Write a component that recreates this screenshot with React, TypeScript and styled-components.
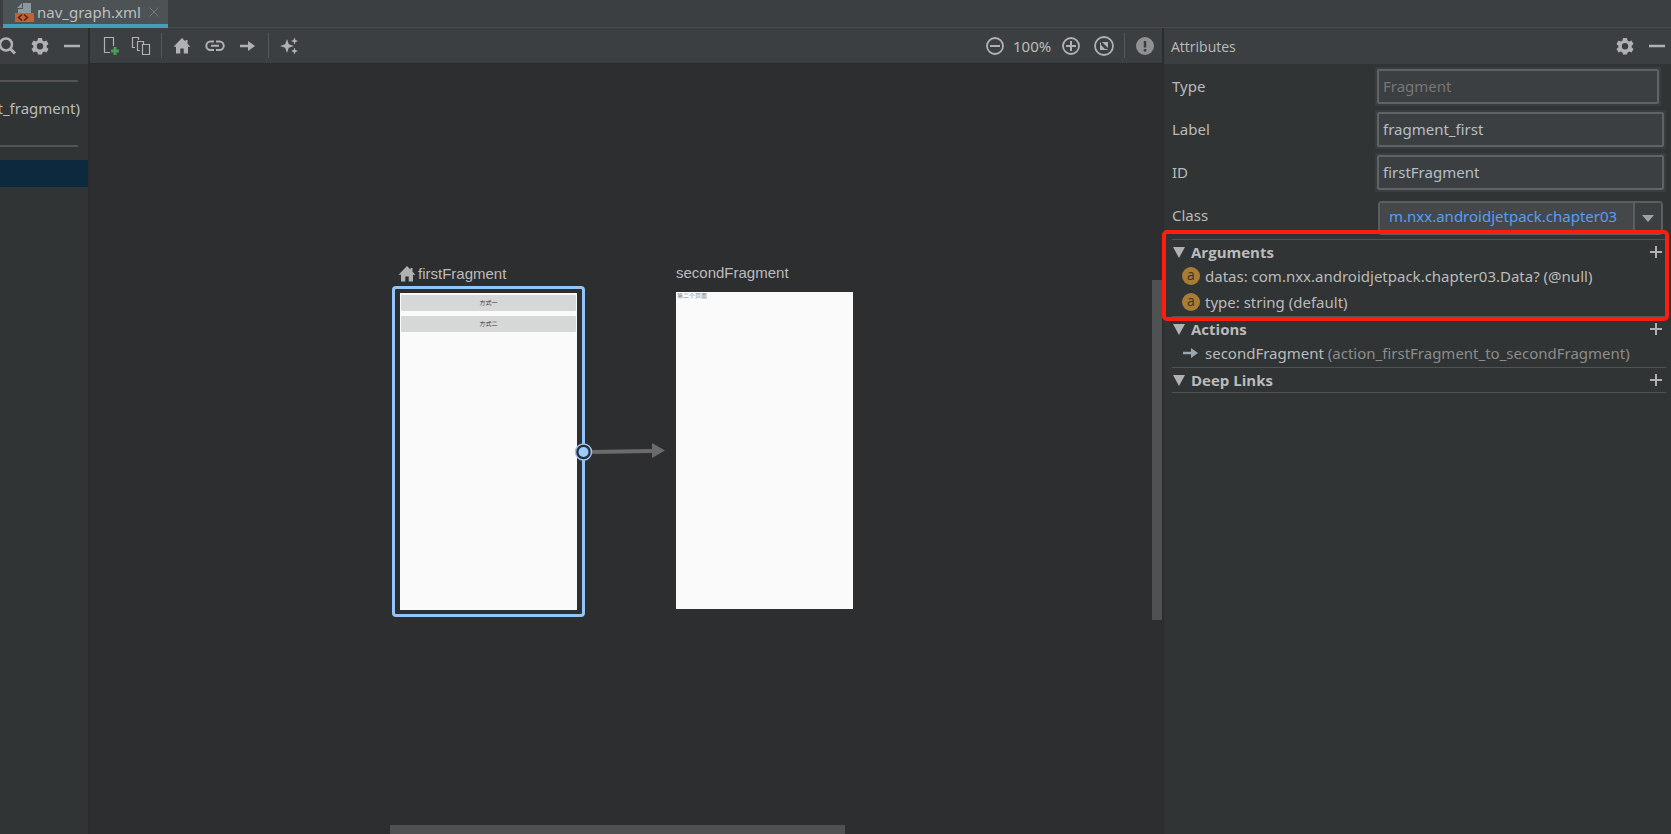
import React from "react";
import styled, { createGlobalStyle } from "styled-components";

const GlobalStyle = createGlobalStyle`
  * { box-sizing: border-box; }
  body {
    margin: 0;
    background: #303434;
    color: #bbbbbb;
    font: 15px/20px "Noto Sans", "Open Sans", sans-serif;
  }
  button, input, select { font: inherit; color: inherit; }
`;

const Window = styled.div`
  min-height: 100vh;
  display: flex;
  flex-direction: column;
  overflow: hidden;
`;

const TabBar = styled.nav`
  height: 28px;
  flex: none;
  display: flex;
  padding-left: 3px;
  background: #3c3f41;
  border-bottom: 1px solid #4b4b4c;
`;

const Tab = styled.div`
  height: 28px;
  display: flex;
  align-items: center;
  gap: 3px;
  padding: 0 4px 0 11px;
  background: #4d5254;
  border-bottom: 4px solid #459fba;
`;

const TabLink = styled.a`
  color: #bdbfc1;
  text-decoration: none;
`;

const IconButton = styled.button`
  width: 20px;
  height: 20px;
  flex: none;
  padding: 0;
  border: 0;
  background: none;
  color: #afb1b3;
  display: grid;
  place-items: center;
`;

const Body = styled.div`
  flex: 1;
  display: flex;
`;

const Sidebar = styled.aside`
  width: 90px;
  flex: none;
  display: flex;
  flex-direction: column;
  overflow: hidden;
  border-right: 2px solid #2c2d2e;
`;

const Header = styled.header`
  height: 36px;
  flex: none;
  display: flex;
  align-items: center;
  background: #3c3f41;
`;

const SidebarHeader = styled(Header)`
  justify-content: flex-end;
  gap: 12px;
  padding-right: 6px;
`;

const SidebarRule = styled.hr`
  width: 78px;
  height: 2px;
  margin: 0;
  border: 0;
  background: #555253;
`;

const TreeList = styled.div`
  display: flex;
  flex-direction: column;
  padding-top: 16px;
`;

const TreeItem = styled.div`
  height: 63px;
  display: flex;
  align-items: center;
  justify-content: flex-end;
  padding: 0 8px 12px 0;
  white-space: nowrap;
`;

const SelectedItem = styled.div`
  height: 27px;
  margin-top: 13px;
  background: #0d293e;
`;

const Workspace = styled.main`
  flex: 1;
  min-width: 0;
  display: flex;
  flex-direction: column;
`;

const Toolbar = styled(Header)`
  border-bottom: 1px solid #2a2b2c;
`;

const ToolGroup = styled.div<{ $gap: number }>`
  display: flex;
  align-items: center;
  gap: ${(p) => p.$gap}px;
  padding: 0 10px;
  &:last-child { padding-right: 7px; }
`;

const Divider = styled.span`
  width: 1px;
  height: 25px;
  background: #55585a;
`;

const Spacer = styled.span`
  flex: 1;
`;

const ZoomGroup = styled.div`
  display: flex;
  align-items: center;
  gap: 8px;
`;

const ZoomText = styled.span`
  width: 40px;
`;

const Canvas = styled.div`
  position: relative;
  flex: 1;
  min-height: 600px;
  overflow: hidden;
  background: #2d2e30;
`;

const Node = styled.section<{ $x: number; $y: number }>`
  position: absolute;
  left: ${(p) => p.$x}px;
  top: ${(p) => p.$y}px;
`;

const NodeTitle = styled.h2<{ $inset?: boolean }>`
  display: flex;
  align-items: center;
  gap: 1px;
  height: 20px;
  margin: 0;
  padding-left: ${(p) => (p.$inset ? 5 : 0)}px;
  font: 400 15px/20px "Liberation Sans", sans-serif;
  color: #bbbcbd;
`;

const Selection = styled.div`
  margin-top: 2px;
  padding: 4px 5px;
  border: 3px solid #94c5f8;
  border-radius: 4px;
`;

const Preview = styled.div<{ $gapAbove?: boolean }>`
  width: 177px;
  height: 317px;
  margin-top: ${(p) => (p.$gapAbove ? 9 : 0)}px;
  display: flex;
  flex-direction: column;
  gap: 5px;
  padding: ${(p) => (p.$gapAbove ? 0 : 2)}px 1px;
  background: #fafafa;
  color: #808080;
  font: 6px/8px "Noto Sans CJK SC", sans-serif;
  text-rendering: geometricPrecision;
`;

const PreviewButton = styled.button`
  height: 16px;
  padding: 0;
  border: 0;
  border-radius: 1px;
  background: #d6d7d7;
  color: #333333;
  text-rendering: inherit;
`;

const Connector = styled.svg`
  position: absolute;
  left: 484px;
  top: 373px;
`;

const ScrollThumb = styled.div<{ $vertical?: boolean }>`
  position: absolute;
  background: #505152;
  ${(p) =>
    p.$vertical
      ? "right: 0; top: 216px; width: 10px; height: 340px;"
      : "left: 300px; bottom: 0; width: 455px; height: 9px;"}
`;

const Attributes = styled.aside`
  width: 509px;
  flex: none;
  border-left: 2px solid #2c2d2e;
`;

const PanelHeader = styled(Header)`
  gap: 12px;
  padding: 0 4px 0 7px;
`;

const PanelTitle = styled.h1`
  flex: 1;
  margin: 0;
  padding-top: 2px;
  font: 400 14px/20px "Open Sans", sans-serif;
`;

const Form = styled.form`
  display: flex;
  flex-direction: column;
  gap: 4px;
  padding: 3px 5px 3px 8px;
`;

const FormRow = styled.div`
  height: 39px;
  display: flex;
  align-items: center;
`;

const FieldLabel = styled.label`
  width: 203px;
  flex: none;
  padding-bottom: 1px;
`;

const FieldFrame = styled.div<{ $short?: boolean }>`
  flex: 1;
  min-width: 0;
  padding: 2px;
  margin-right: ${(p) => (p.$short ? 5 : 0)}px;
  background: #3a3d3f;
`;

const TextField = styled.input`
  display: block;
  width: 100%;
  height: 35px;
  padding: 0 4px 1px;
  border: 2px solid #606365;
  border-radius: 2px;
  background: #3c3f41;
  color: #b4bfc9;
  &:disabled { color: #777777; }
`;

const ComboBox = styled.div`
  flex: 1;
  height: 34px;
  margin: 4px 3px 0;
  display: flex;
  position: relative;
  border: 2px solid #5c5f60;
  border-radius: 4px;
  background: #3c3f41;
`;

const ComboSelect = styled.select`
  appearance: none;
  width: 100%;
  padding: 0 30px 3px 9px;
  border: 0;
  background: linear-gradient(to left, #3c3f41 26px, #5c5f60 26px, #5c5f60 28px, #44484a 28px);
  color: #589df6;
`;

const ComboArrow = styled.svg`
  position: absolute;
  right: 7px;
  top: 11px;
  pointer-events: none;
`;

const Sections = styled.div`
  position: relative;
  margin: 1px 5px 0 8px;
  border-bottom: 1px solid #515455;
`;

const Section = styled.section`
  border-top: 1px solid #515455;
`;

const SectionHeader = styled.header`
  height: 24px;
  display: flex;
  align-items: center;
  gap: 6px;
  padding-left: 1px;
`;

const SectionTitle = styled.h2`
  flex: 1;
  margin: 0;
  font: 700 15px/20px "Open Sans", sans-serif;
`;

const ItemList = styled.ul`
  margin: 0;
  padding: 0;
  list-style: none;
`;

const Item = styled.li`
  height: 26px;
  display: flex;
  align-items: center;
  gap: 5px;
  padding: 0 0 2px 10px;
  white-space: nowrap;
`;

const ArgumentBadge = styled.span`
  width: 18px;
  height: 18px;
  border-radius: 9px;
  background: #a87c34;
  color: #3a3428;
  text-align: center;
  font: 14px/16px "Open Sans", sans-serif;
`;

const Muted = styled.span`
  color: #8c8c8c;
`;

const Highlight = styled.div`
  position: absolute;
  left: -10px;
  right: -3px;
  top: -9px;
  height: 91px;
  border: 4px solid #ff1d10;
  border-radius: 5px;
  pointer-events: none;
`;

const IconGlyph = styled.span`
  display: flex;
  color: #afb1b3;
`;

const ActionGlyph = styled.span`
  width: 18px;
  display: flex;
  justify-content: center;
  color: #9aa7b0;
  svg { flex: none; }
`;

const Svg = ({ children }: { children: React.ReactNode }) => (
  <svg width="20" height="20" viewBox="0 0 20 20" fill="none" stroke="currentColor" strokeWidth="2" aria-hidden="true">
    {children}
  </svg>
);

const Gear = () => (
  <Svg>
    <path
      fill="currentColor"
      stroke="none"
      fillRule="evenodd"
      d="M8 2h4l.5 2.500 1.600.9 2.400-.8 2 3.400-1.900 1.700v1.600l1.900 1.700-2 3.400-2.400-.8-1.600.9L12 18.500H8l-.5-2-1.600-.9-2.400.8-2-3.400 1.900-1.700V9.700L1.500 8l2-3.400 2.400.8 1.600-.9zM10 7a3.200 3.200 0 1 0 0 6.400A3.200 3.200 0 0 0 10 7z"
    />
  </Svg>
);

const Minus = () => (
  <Svg>
    <path d="M2 10h16" strokeWidth="2.500" />
  </Svg>
);

const Plus = () => (
  <Svg>
    <path d="M10 4v12M4 10h12" />
  </Svg>
);

const Home = () => (
  <Svg>
    <path fill="currentColor" stroke="none" d="M10 2 1.500 10.800H4V17.500h4.300v-5h3.400v5H16v-6.700h2.500L15.500 7.700V4h-2v1.600z" />
  </Svg>
);

const Arrow = () => (
  <Svg>
    <path d="M2 10h9" strokeWidth="2.500" />
    <path fill="currentColor" stroke="none" d="M10 5v10l7-5z" />
  </Svg>
);

const Caret = () => (
  <svg width="12" height="12" viewBox="0 0 12 12" aria-hidden="true">
    <path d="M0 1h12L6 12z" fill="#afb1b3" />
  </svg>
);

const Collapsible = ({ title, children }: { title: string; children?: React.ReactNode }) => (
  <Section>
    <SectionHeader>
      <Caret />
      <SectionTitle>{title}</SectionTitle>
      <IconButton aria-label={`Add to ${title}`}>
        <Plus />
      </IconButton>
    </SectionHeader>
    {children && <ItemList>{children}</ItemList>}
  </Section>
);

export default function App() {
  return (
    <Window>
      <GlobalStyle />
      <TabBar>
        <Tab>
          <svg width="20" height="20" viewBox="0 0 20 20" aria-hidden="true">
            <path d="M9 1h8v10H4V7h5z" fill="#8b989f" />
            <path d="M8 1v5H3z" fill="#8b989f" />
            <path d="M1 11h19v9H1z" fill="#c4622f" />
            <path d="M8 12.500 4.500 15.500 8 18.500M10 12.500l3.500 3-3.500 3" fill="none" stroke="#3c2a22" strokeWidth="1.500" />
          </svg>
          <TabLink href="#nav_graph">nav_graph.xml</TabLink>
          <IconButton aria-label="Close tab">
            <svg width="10" height="10" viewBox="0 0 10 10" stroke="#76797b" aria-hidden="true">
              <path d="M.5.5l9 9M9.500.5l-9 9" />
            </svg>
          </IconButton>
        </Tab>
      </TabBar>

      <Body>
        <Sidebar>
          <SidebarHeader>
            <IconButton aria-label="Search">
              <Svg>
                <circle cx="8" cy="8.500" r="6" strokeWidth="2.500" />
                <path d="M12 12.500l5 5" strokeWidth="3" />
              </Svg>
            </IconButton>
            <IconButton aria-label="Tree settings"><Gear /></IconButton>
            <IconButton aria-label="Hide tree"><Minus /></IconButton>
          </SidebarHeader>
          <TreeList>
            <SidebarRule />
            <TreeItem>t_fragment)</TreeItem>
            <SidebarRule />
            <SelectedItem />
          </TreeList>
        </Sidebar>

        <Workspace>
          <Toolbar>
            <ToolGroup $gap={11}>
              <IconButton aria-label="New destination">
                <Svg>
                  <path d="M13.500 10V1.500h-9v15H10" strokeWidth="1.200" />
                  <path d="M15 11v8M11 15h8" stroke="#499c54" strokeWidth="3" />
                </Svg>
              </IconButton>
              <IconButton aria-label="Nested graph">
                <Svg>
                  <path d="M4 11.500H1.500v-10h6V4M9 14.500H6.500v-9h6V8M11.500 8.500h7v10h-7z" strokeWidth="1.200" />
                </Svg>
              </IconButton>
            </ToolGroup>
            <Divider />
            <ToolGroup $gap={13}>
              <IconButton aria-label="Set start destination"><Home /></IconButton>
              <IconButton aria-label="Add deep link">
                <Svg>
                  <path d="M9 5.500H5.500a4.200 4.200 0 0 0 0 8.400H9M11 5.500h3.500a4.200 4.200 0 0 1 0 8.400H11M6 9.700h8" />
                </Svg>
              </IconButton>
              <IconButton aria-label="Add action"><Arrow /></IconButton>
            </ToolGroup>
            <Divider />
            <ToolGroup $gap={13}>
              <IconButton aria-label="Auto arrange">
                <Svg>
                  <path
                    fill="currentColor"
                    stroke="none"
                    d="M8 3l1.800 5.200L15 10l-5.200 1.800L8 17l-1.800-5.200L1 10l5.200-1.800zM15.500 1.500l1 2.500 2.500 1-2.500 1-1 2.500-1-2.500-2.500-1 2.500-1zM15.500 11.500l1 2.500 2.500 1-2.500 1-1 2.500-1-2.500-2.500-1 2.500-1z"
                  />
                </Svg>
              </IconButton>
            </ToolGroup>
            <Spacer />
            <ToolGroup $gap={13}>
              <ZoomGroup>
                <IconButton aria-label="Zoom out">
                  <Svg>
                    <circle cx="10" cy="10" r="8" strokeWidth="1.800" />
                    <path d="M5 10h10" />
                  </Svg>
                </IconButton>
                <ZoomText>100%</ZoomText>
                <IconButton aria-label="Zoom in">
                  <Svg>
                    <circle cx="10" cy="10" r="8" strokeWidth="1.800" />
                    <path d="M5 10h10M10 5v10" />
                  </Svg>
                </IconButton>
              </ZoomGroup>
              <IconButton aria-label="Zoom to fit">
                <Svg>
                  <circle cx="10" cy="10" r="9" strokeWidth="1.800" />
                  <path fill="currentColor" stroke="none" d="M8 6h6v6zM6 8v6h6z" />
                  <path d="M6.500 6.500v3M13.500 13.500h-3" strokeWidth="1" />
                </Svg>
              </IconButton>
            </ToolGroup>
            <Divider />
            <ToolGroup $gap={13}>
              <IconButton aria-label="Warnings">
                <Svg>
                  <circle cx="10" cy="10" r="9" fill="#8f9192" stroke="none" />
                  <path d="M10 5v6.500M10 13v2.500" stroke="#3c3f41" strokeWidth="2.500" />
                </Svg>
              </IconButton>
            </ToolGroup>
          </Toolbar>

          <Canvas>
            <Node $x={302} $y={200}>
              <NodeTitle $inset>
                <IconGlyph><Home /></IconGlyph>
                firstFragment
              </NodeTitle>
              <Selection>
                <Preview>
                  <PreviewButton>方式一</PreviewButton>
                  <PreviewButton>方式二</PreviewButton>
                </Preview>
              </Selection>
            </Node>
            <Node $x={586} $y={199}>
              <NodeTitle>secondFragment</NodeTitle>
              <Preview $gapAbove>第二个页面</Preview>
            </Node>
            <Connector width="100" height="30" viewBox="0 0 100 30" aria-hidden="true">
              <path d="M17 15l61-1" stroke="#6b6b6b" strokeWidth="4" />
              <path d="M78 6v15l13-7.500z" fill="#6b6b6b" />
              <circle cx="9.500" cy="15" r="8" fill="#2d2e30" stroke="#94c5f8" strokeWidth="1.500" />
              <circle cx="9.500" cy="15" r="5" fill="#9accff" />
            </Connector>
            <ScrollThumb $vertical />
            <ScrollThumb />
          </Canvas>
        </Workspace>

        <Attributes>
          <PanelHeader>
            <PanelTitle>Attributes</PanelTitle>
            <IconButton aria-label="Attribute settings"><Gear /></IconButton>
            <IconButton aria-label="Hide attributes"><Minus /></IconButton>
          </PanelHeader>
          <Form>
            <FormRow>
              <FieldLabel htmlFor="type">Type</FieldLabel>
              <FieldFrame $short><TextField id="type" defaultValue="Fragment" disabled /></FieldFrame>
            </FormRow>
            <FormRow>
              <FieldLabel htmlFor="label">Label</FieldLabel>
              <FieldFrame><TextField id="label" defaultValue="fragment_first" /></FieldFrame>
            </FormRow>
            <FormRow>
              <FieldLabel htmlFor="id">ID</FieldLabel>
              <FieldFrame><TextField id="id" defaultValue="firstFragment" /></FieldFrame>
            </FormRow>
            <FormRow>
              <FieldLabel htmlFor="class">Class</FieldLabel>
              <ComboBox>
                <ComboSelect id="class">
                  <option>m.nxx.androidjetpack.chapter03</option>
                </ComboSelect>
                <ComboArrow width="12" height="8" viewBox="0 0 12 8" aria-hidden="true">
                  <path d="M0 1h12L6 8z" fill="#9fa1a2" />
                </ComboArrow>
              </ComboBox>
            </FormRow>
          </Form>
          <Sections>
            <Collapsible title="Arguments">
              <Item>
                <ArgumentBadge>a</ArgumentBadge>
                <span>datas: com.nxx.androidjetpack.chapter03.Data? (@null)</span>
              </Item>
              <Item>
                <ArgumentBadge>a</ArgumentBadge>
                <span>type: string (default)</span>
              </Item>
            </Collapsible>
            <Collapsible title="Actions">
              <Item>
                <ActionGlyph><Arrow /></ActionGlyph>
                <span>secondFragment <Muted>(action_firstFragment_to_secondFragment)</Muted></span>
              </Item>
            </Collapsible>
            <Collapsible title="Deep Links" />
            <Highlight />
          </Sections>
        </Attributes>
      </Body>
    </Window>
  );
}
